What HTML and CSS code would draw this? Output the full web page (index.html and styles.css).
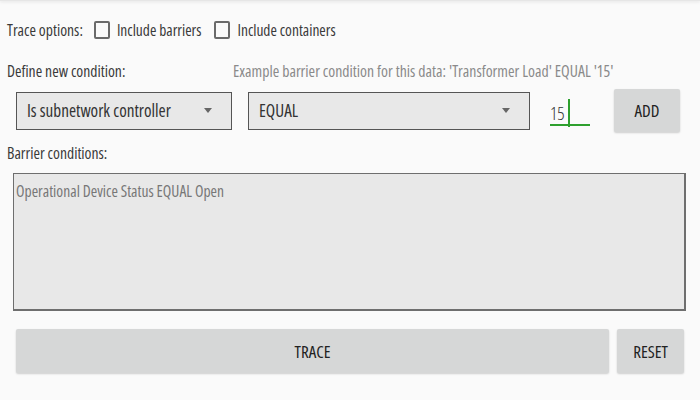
FILE: index.html
```html
<!DOCTYPE html>
<html>
<head>
<meta charset="utf-8">
<link rel="stylesheet" href="styles.css">
</head>
<body>
<div class="topshadow"></div>
<div class="page">
  <div class="row-options">
    <span class="label">Trace options:</span>
    <span class="check"></span>
    <span class="check-label">Include barriers</span>
    <span class="check second"></span>
    <span class="check-label">Include containers</span>
  </div>
  <div class="row-define">
    <span class="label define">Define new condition:</span>
    <span class="hint">Example barrier condition for this data: 'Transformer Load' EQUAL '15'</span>
  </div>
  <div class="row-controls">
    <div class="spinner spinner-attr"><span>Is subnetwork controller</span><span class="arrow"></span></div>
    <div class="spinner spinner-op"><span>EQUAL</span><span class="arrow"></span></div>
    <div class="value-input"><span class="value">15</span><span class="cursor"></span></div>
    <button class="btn btn-add">ADD</button>
  </div>
  <div class="row-barrier"><span class="label">Barrier conditions:</span></div>
  <div class="conditions">Operational Device Status EQUAL Open</div>
  <div class="row-buttons">
    <button class="btn btn-trace">TRACE</button>
    <button class="btn btn-reset">RESET</button>
  </div>
</div>
</body>
</html>
```

FILE: styles.css
```css
html, body {
  margin: 0;
  padding: 0;
  background: #fafafa;
  width: 700px;
  height: 400px;
  overflow: hidden;
  font-family: "Open Sans", "Noto Sans", sans-serif;
  font-stretch: 80%;
  color: #333;
}
.topshadow {
  height: 1px;
  background: #e6e6e6;
  box-shadow: 0 1px 3px rgba(0,0,0,0.15);
}
.page {
  padding-left: 7px;
}
.label {
  font-size: 15.7px;
  color: #3a3a3a;
}
.row-options {
  display: flex;
  align-items: center;
  height: 26px;
  margin-top: 16px;
}
.check {
  width: 12px;
  height: 14px;
  border: 2px solid #6a6a6a;
  border-radius: 2px;
  margin-left: 11px;
  margin-right: 7px;
}
.check.second { margin-left: 13px; }
.check-label {
  font-size: 15.5px;
  color: #3a3a3a;
}
.row-define {
  display: flex;
  align-items: center;
  height: 20px;
  margin-top: 18px;
}
.define { width: 226px; }
.hint {
  font-size: 15.8px;
  color: #8a8a8a;
}
.row-controls {
  display: flex;
  align-items: center;
  height: 43px;
  margin-top: 8px;
  margin-left: 9px;
}
.spinner {
  box-sizing: border-box;
  height: 38px;
  background: #e8e8e8;
  border: 1px solid #555;
  display: flex;
  align-items: center;
  justify-content: space-between;
  padding: 0 19px 0 10px;
  font-size: 17.2px;
  color: #333;
  white-space: nowrap;
}
.spinner-attr { width: 216px; }
.spinner-op { width: 282px; margin-left: 16px; }
.arrow {
  width: 0;
  height: 0;
  border-left: 4px solid transparent;
  border-right: 4px solid transparent;
  border-top: 5px solid #666;
}
.value-input {
  position: relative;
  width: 40px;
  height: 30px;
  margin-left: 20px;
  border-bottom: 2px solid #2ea02e;
  box-sizing: border-box;
  display: flex;
  align-items: flex-end;
}
.value {
  font-size: 18px;
  font-weight: 300;
  color: #333;
  line-height: 20px;
  padding-bottom: 1px;
}
.cursor {
  position: absolute;
  left: 18px;
  top: 3px;
  width: 2px;
  height: 28px;
  background: #2ea02e;
}
.btn {
  box-sizing: border-box;
  border: none;
  border-radius: 2px;
  background: #d6d7d7;
  box-shadow: 0 1px 2px rgba(0,0,0,0.18);
  font-family: "Open Sans", "Noto Sans", sans-serif;
  font-stretch: 80%;
  font-size: 17px;
  font-weight: 500;
  color: #222;
  padding: 0;
}
.btn-add {
  width: 66px;
  height: 43px;
  margin-left: 24px;
}
.row-barrier {
  display: flex;
  align-items: center;
  height: 20px;
  margin-top: 11px;
}
.conditions {
  box-sizing: border-box;
  width: 673px;
  height: 138px;
  margin-top: 10px;
  margin-left: 6px;
  background: #e8e8e8;
  border: 1px solid #6e6e6e;
  border-right-width: 2px;
  border-bottom-width: 2px;
  padding: 6px 2px;
  font-size: 15.6px;
  color: #777;
}
.row-buttons {
  display: flex;
  margin-top: 18px;
  margin-left: 9px;
}
.btn-trace {
  width: 593px;
  height: 44px;
}
.btn-reset {
  width: 67px;
  height: 44px;
  margin-left: 8px;
}
```
